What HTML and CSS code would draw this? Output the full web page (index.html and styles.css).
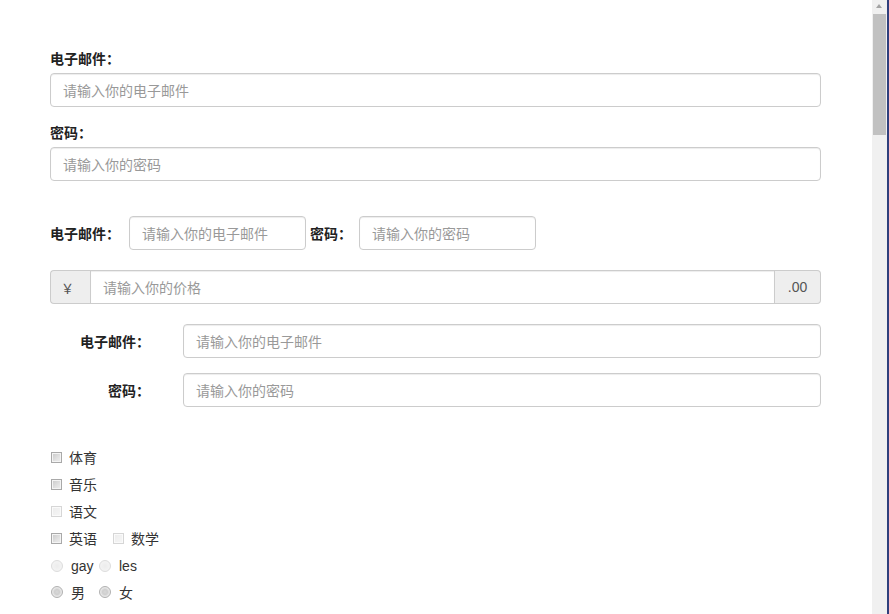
FILE: index.html
```html
<!DOCTYPE html>
<html lang="zh">
<head>
<meta charset="utf-8">
<title>表单</title>
<link rel="stylesheet" href="styles.css">
</head>
<body>
<div class="window">
  <main class="main">
    <form class="form-basic">
      <div class="form-group">
        <label class="lbl">电子邮件：</label>
        <input class="form-control" type="text" placeholder="请输入你的电子邮件">
      </div>
      <div class="form-group">
        <label class="lbl">密码：</label>
        <input class="form-control" type="password" placeholder="请输入你的密码">
      </div>
    </form>

    <form class="form-inline">
      <label class="lbl lbl-email">电子邮件：</label>
      <input class="form-control inline-input gap-after" type="text" placeholder="请输入你的电子邮件">
      <label class="lbl lbl-pass">密码：</label>
      <input class="form-control inline-input" type="password" placeholder="请输入你的密码">
    </form>

    <div class="input-group">
      <span class="addon addon-left">￥</span>
      <input class="form-control group-input" type="text" placeholder="请输入你的价格">
      <span class="addon addon-right">.00</span>
    </div>

    <form class="form-horizontal">
      <div class="h-row">
        <label class="lbl h-label">电子邮件：</label>
        <input class="form-control" type="text" placeholder="请输入你的电子邮件">
      </div>
      <div class="h-row">
        <label class="lbl h-label">密码：</label>
        <input class="form-control" type="password" placeholder="请输入你的密码">
      </div>
    </form>

    <div class="checks">
      <div class="row"><label class="opt"><input type="checkbox" class="cb"><span>体育</span></label></div>
      <div class="row"><label class="opt"><input type="checkbox" class="cb"><span>音乐</span></label></div>
      <div class="row"><label class="opt"><input type="checkbox" class="cb" disabled><span>语文</span></label></div>
      <div class="row">
        <label class="opt first-check"><input type="checkbox" class="cb"><span>英语</span></label>
        <label class="opt"><input type="checkbox" class="cb" disabled><span>数学</span></label>
      </div>
      <div class="row radio-row">
        <label class="opt first-radio"><input type="radio" name="a" class="rd" disabled><span class="latin">gay</span></label>
        <label class="opt"><input type="radio" name="a" class="rd" disabled><span class="latin">les</span></label>
      </div>
      <div class="row">
        <label class="opt first-radio"><input type="radio" name="b" class="rd"><span>男</span></label>
        <label class="opt"><input type="radio" name="b" class="rd"><span>女</span></label>
      </div>
    </div>
  </main>
  <div class="scrollbar">
    <div class="arrow"></div>
    <div class="thumb"></div>
  </div>
  <div class="edge"></div>
</div>
</body>
</html>
```

FILE: styles.css
```css
html, body {
  margin: 0;
  padding: 0;
  height: 100%;
  overflow: hidden;
  background: #fff;
}

body {
  font-family: "Noto Sans CJK SC", "Liberation Sans", sans-serif;
  font-size: 14px;
  color: #333;
}

.window {
  display: flex;
  height: 614px;
}

.main {
  flex: 1;
  padding: 48px 51px 0 50px;
  min-width: 0;
}

.lbl {
  display: block;
  font-weight: bold;
  font-size: 14px;
  line-height: 20px;
  color: #222;
}

.form-control {
  display: block;
  box-sizing: border-box;
  width: 100%;
  height: 34px;
  padding: 6px 12px;
  font-family: "Noto Sans CJK SC", "Liberation Sans", sans-serif;
  font-size: 14px;
  color: #555;
  background: #fff;
  border: 1px solid #ccc;
  border-radius: 4px;
  box-shadow: inset 0 1px 1px rgba(0,0,0,.075);
  outline: none;
}

.form-control::placeholder {
  color: #999;
}

.form-basic .lbl {
  margin-bottom: 5px;
}

.form-group {
  margin-bottom: 15px;
}

.form-basic {
  margin-bottom: 35px;
}

.form-inline {
  display: flex;
  align-items: center;
  margin-bottom: 20px;
}

.form-inline .lbl {
  flex: none;
}

.lbl-email {
  margin-right: 9px;
}

.lbl-pass {
  margin-right: 7px;
}

.inline-input {
  width: 177px;
  flex: none;
}

.gap-after {
  margin-right: 4px;
}

.input-group {
  display: flex;
  height: 34px;
  margin-bottom: 20px;
}

.addon {
  box-sizing: border-box;
  display: flex;
  align-items: center;
  justify-content: center;
  background: #eee;
  border: 1px solid #ccc;
  color: #555;
  font-size: 14px;
  flex: none;
}

.addon-left {
  width: 40px;
  border-right: 0;
  border-radius: 4px 0 0 4px;
  font-size: 13px;
  padding-right: 6px;
}

.addon-right {
  width: 46px;
  border-left: 0;
  border-radius: 0 4px 4px 0;
  font-family: "Liberation Sans", sans-serif;
}

.group-input {
  flex: 1;
  border-radius: 0;
}

.h-row {
  display: flex;
  align-items: center;
  margin-bottom: 15px;
}

.h-label {
  flex: none;
  width: 133px;
  box-sizing: border-box;
  padding-right: 33px;
  text-align: right;
}

.checks {
  display: flex;
  flex-direction: column;
  gap: 7px;
  padding-top: 25px;
}

.row {
  display: flex;
  align-items: center;
  height: 20px;
}

.radio-row {
  margin-top: 1px;
  margin-bottom: -1px;
}

.opt {
  display: flex;
  align-items: center;
  font-weight: normal;
  color: #333;
  line-height: 20px;
}

.first-check {
  width: 62px;
}

.first-radio {
  width: 48px;
}

.latin {
  font-family: "Liberation Sans", sans-serif;
}

.cb, .rd {
  -webkit-appearance: none;
  appearance: none;
  margin: 0 7px 0 1px;
  width: 11px;
  height: 11px;
  box-sizing: border-box;
  flex: none;
}

.cb {
  border: 1px solid #a9a9a9;
  background: linear-gradient(135deg, #c8c8c8 0%, #e2e2e2 60%, #eeeeee 100%);
  box-shadow: inset 0 0 0 1px #f4f4f4;
}

.cb:disabled {
  border-color: #d6d6d6;
  background: linear-gradient(135deg, #ececec 0%, #f6f6f6 100%);
  box-shadow: inset 0 0 0 1px #fafafa;
}

.rd {
  width: 12px;
  height: 12px;
  margin-right: 8px;
  border-radius: 50%;
  border: 1px solid #b0b0b0;
  background: radial-gradient(circle at 50% 50%, #d8d8d8 0%, #cfcfcf 35%, #e6e6e6 60%, #f2f2f2 100%);
}

.rd:disabled {
  border-color: #dcdcdc;
  background: radial-gradient(circle at 50% 50%, #ececec 0%, #f2f2f2 60%, #f8f8f8 100%);
}

.scrollbar {
  width: 15px;
  flex: none;
  background: #f0f0f0;
  position: relative;
}

.arrow {
  position: absolute;
  top: 4px;
  left: 4px;
  width: 0;
  height: 0;
  border-left: 3px solid transparent;
  border-right: 3px solid transparent;
  border-bottom: 4px solid #a3a3a3;
}

.thumb {
  position: absolute;
  top: 14px;
  left: 1px;
  width: 13px;
  height: 121px;
  background: #c1c1c1;
}

.edge {
  width: 2px;
  flex: none;
  background: #2f3f7c;
}
```
